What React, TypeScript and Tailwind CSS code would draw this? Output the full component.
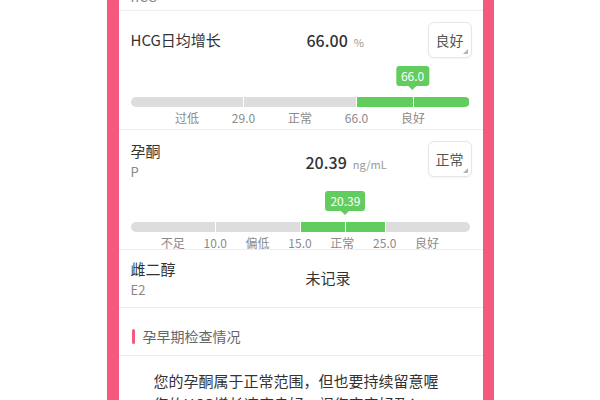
import React from "react";

const font = { fontFamily: '"Noto Sans CJK SC", "Noto Sans", sans-serif' };

type Seg = { w: number; green?: boolean };

function Badge({ text }: { text: string }) {
  return (
    <div className="relative flex h-[36px] w-[44px] items-center justify-center rounded-[6px] border border-[#e6e6e6] bg-white text-[14px] text-[#555] shadow-[0_1px_2px_rgba(0,0,0,0.05)]">
      {text}
      <svg className="absolute bottom-[3px] right-[3px]" width="5" height="5" viewBox="0 0 5 5">
        <path d="M5 0 L5 5 L0 5 Z" fill="#b5b5b5" />
      </svg>
    </div>
  );
}

function RangeBar({
  segs,
  marker,
  tip,
  labels,
}: {
  segs: Seg[];
  marker: number;
  tip: string;
  labels: { text: string; at: number }[];
}) {
  return (
    <div className="mr-[2px]">
      <div className="relative h-[10px]">
        <div className="flex h-[10px] gap-px overflow-hidden rounded-full bg-white">
          {segs.map((s, i) => (
            <div
              key={i}
              className={s.green ? "bg-[#62cd5f]" : "bg-[#dddddd]"}
              style={{ flex: s.w }}
            />
          ))}
        </div>
        <div className="absolute top-0 h-[10px] w-px bg-white" style={{ left: `${marker}%` }} />
        <div
          className="absolute bottom-[17px] flex -translate-x-1/2 flex-col items-center"
          style={{ left: `${marker}%` }}
        >
          <div className="flex h-[20px] items-center rounded-[3px] bg-[#62cd5f] px-[5px] text-[12px] text-white">
            {tip}
          </div>
          <div className="h-0 w-0 border-x-[4px] border-t-[4px] border-x-transparent border-t-[#62cd5f]" />
        </div>
      </div>
      <div className="relative mt-[3px] h-[16px] text-[12px] leading-[16px] text-[#8a8a8a]">
        {labels.map((l) => (
          <span
            key={l.text + l.at}
            className="absolute -translate-x-1/2 whitespace-nowrap"
            style={{ left: `${l.at}%` }}
          >
            {l.text}
          </span>
        ))}
      </div>
    </div>
  );
}

export default function App() {
  const third = 100 / 3;
  return (
    <div className="flex h-[400px] w-[600px] justify-center overflow-hidden bg-white" style={font}>
      <div className="w-[387px] border-l-[12px] border-r-[11px] border-[#f35a7d] bg-white">
        {/* previous row, cut off */}
        <div className="h-[11px] overflow-hidden border-b border-[#eeeeee] pl-[12px]">
          <div className="-mt-[12px] text-[14px] leading-[16px] text-[#888]">hCG</div>
        </div>

        {/* HCG */}
        <div className="h-[119px] border-b border-[#eeeeee] pl-[12px] pr-[11px]">
          <div className="flex items-center pt-[11px]">
            <div className="w-[176px] text-[15px] text-[#333]">HCG日均增长</div>
            <div className="flex flex-1 items-baseline gap-[6px]">
              <span className="text-[16px] font-medium text-[#333]">66.00</span>
              <span className="text-[11px] text-[#999]">%</span>
            </div>
            <Badge text="良好" />
          </div>
          <div className="mt-[39px]">
            <RangeBar
              segs={[{ w: 1 }, { w: 1 }, { w: 1, green: true }]}
              marker={83.2}
              tip="66.0"
              labels={[
                { text: "过低", at: third / 2 },
                { text: "29.0", at: third },
                { text: "正常", at: third * 1.5 },
                { text: "66.0", at: third * 2 },
                { text: "良好", at: third * 2.5 },
              ]}
            />
          </div>
        </div>

        {/* 孕酮 */}
        <div className="h-[120px] border-b border-[#eeeeee] pl-[12px] pr-[11px]">
          <div className="flex items-start pt-[11px]">
            <div className="w-[175px]">
              <div className="text-[15px] leading-[20px] text-[#333]">孕酮</div>
              <div className="mt-[2px] text-[13px] leading-[18px] text-[#888]">P</div>
            </div>
            <div className="flex flex-1 items-baseline gap-[6px] pt-[9px]">
              <span className="text-[16px] font-medium text-[#333]">20.39</span>
              <span className="text-[11px] text-[#999]">ng/mL</span>
            </div>
            <Badge text="正常" />
          </div>
          <div className="mt-[41px]">
            <RangeBar
              segs={[{ w: 1 }, { w: 1 }, { w: 1, green: true }, { w: 1 }]}
              marker={63.4}
              tip="20.39"
              labels={[
                { text: "不足", at: 12.5 },
                { text: "10.0", at: 25 },
                { text: "偏低", at: 37.5 },
                { text: "15.0", at: 50 },
                { text: "正常", at: 62.5 },
                { text: "25.0", at: 75 },
                { text: "良好", at: 87.5 },
              ]}
            />
          </div>
        </div>

        {/* 雌二醇 */}
        <div className="flex h-[58px] items-center border-b border-[#eeeeee] pl-[12px]">
          <div className="w-[175px]">
            <div className="text-[15px] leading-[20px] text-[#333]">雌二醇</div>
            <div className="mt-[2px] text-[13px] leading-[18px] text-[#888]">E2</div>
          </div>
          <div className="text-[15px] text-[#333]">未记录</div>
        </div>

        {/* section */}
        <div className="flex h-[48px] items-end border-b border-[#eeeeee] pb-[11px] pl-[13px]">
          <div className="mr-[8px] h-[15px] w-[3px] rounded-full bg-[#f35a7d]" />
          <div className="text-[14px] leading-[15px] text-[#666]">孕早期检查情况</div>
        </div>

        <div className="pl-[35px] pt-[13px] text-[15px] leading-[23px] text-[#333]">
          <p>您的孕酮属于正常范围，但也要持续留意喔</p>
          <p>您的HCG增长速度良好，祝您宝宝好孕！</p>
        </div>
      </div>
    </div>
  );
}
